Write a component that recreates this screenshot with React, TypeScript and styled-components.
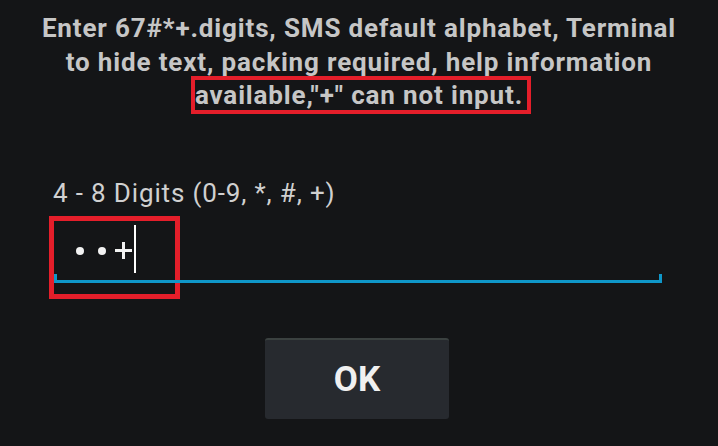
import React from "react";
import styled, { createGlobalStyle } from "styled-components";

const Global = createGlobalStyle`
  html, body { margin: 0; padding: 0; background: #141517; }
  body { font-family: Roboto, "Noto Sans", sans-serif; }
`;

const Page = styled.div`
  width: 718px;
  height: 446px;
  background: #141517;
  display: flex;
  flex-direction: column;
  align-items: stretch;
  box-sizing: border-box;
  padding-top: 12px;
  overflow: hidden;
`;

const Message = styled.p`
  margin: 0;
  font-family: Roboto, sans-serif;
  font-weight: 700;
  font-size: 26px;
  letter-spacing: 0.85px;
  line-height: 33.5px;
  color: #c6c6c6;
  text-align: center;
`;

const Highlight = styled.span`
  display: inline-block;
  border: 4px solid #e41e2a;
  margin: -6px -8px -6px -4px;
  padding: 0 4px 0 0;
  line-height: 30px;
`;

const Field = styled.div`
  margin: 65px 56px 0 54px;
  display: flex;
  flex-direction: column;
`;

const Label = styled.div`
  font-family: Roboto, sans-serif;
  font-weight: 400;
  font-size: 26px;
  letter-spacing: 0.85px;
  line-height: 30px;
  color: #d0d0d0;
  margin-left: -1px;
`;

const InputArea = styled.div`
  position: relative;
  height: 72px;
  box-sizing: border-box;
  padding-top: 14px;
  display: flex;
  align-items: center;
  padding-left: 22px;
  gap: 14px;
`;

const Underline = styled.div`
  position: relative;
  height: 3px;
  background: #0f97c9;
  &::before, &::after {
    content: "";
    position: absolute;
    bottom: 0;
    width: 3px;
    height: 9px;
    background: #0f97c9;
  }
  &::before { left: 0; }
  &::after { right: 0; }
`;

const Dot = styled.span`
  width: 8px;
  height: 8px;
  border-radius: 50%;
  background: #f2f2f2;
  flex: none;
`;

const Plus = styled.span`
  position: relative;
  width: 17px;
  height: 17px;
  flex: none;
  margin-left: -5px;
  &::before, &::after {
    content: "";
    position: absolute;
    background: #f2f2f2;
  }
  &::before { left: 0; right: 0; top: 7px; height: 3px; }
  &::after { top: 0; bottom: 0; left: 7px; width: 3px; }
`;

const Cursor = styled.span`
  width: 2px;
  height: 48px;
  background: #ffffff;
  margin-left: -12px;
  margin-bottom: 4px;
  flex: none;
`;

const Annotation = styled.div`
  position: absolute;
  left: -5px;
  top: 8px;
  width: 121px;
  height: 73px;
  border: 5px solid #e41e2a;
  pointer-events: none;
`;

const ButtonRow = styled.div`
  display: flex;
  justify-content: center;
  margin-top: 55px;
`;

const OkButton = styled.button`
  width: 184px;
  height: 81px;
  margin-left: -4px;
  border: none;
  border-top: 2px solid #3b4140;
  border-radius: 3px;
  background: #272a2f;
  color: #f0f0f0;
  font-family: Roboto, sans-serif;
  font-weight: 700;
  font-size: 35px;
  padding: 0;
  cursor: pointer;
`;

export default function App() {
  return (
    <>
      <Global />
      <Page>
        <Message>
          Enter 67#*+.digits, SMS default alphabet, Terminal
          <br />
          to hide text, packing required, help information
          <br />
          <Highlight>available,"+" can not input.</Highlight>
        </Message>
        <Field>
          <Label>4 - 8 Digits (0-9, *, #, +)</Label>
          <InputArea>
            <Dot />
            <Dot />
            <Plus />
            <Cursor />
            <Annotation />
          </InputArea>
          <Underline />
        </Field>
        <ButtonRow>
          <OkButton>OK</OkButton>
        </ButtonRow>
      </Page>
    </>
  );
}
